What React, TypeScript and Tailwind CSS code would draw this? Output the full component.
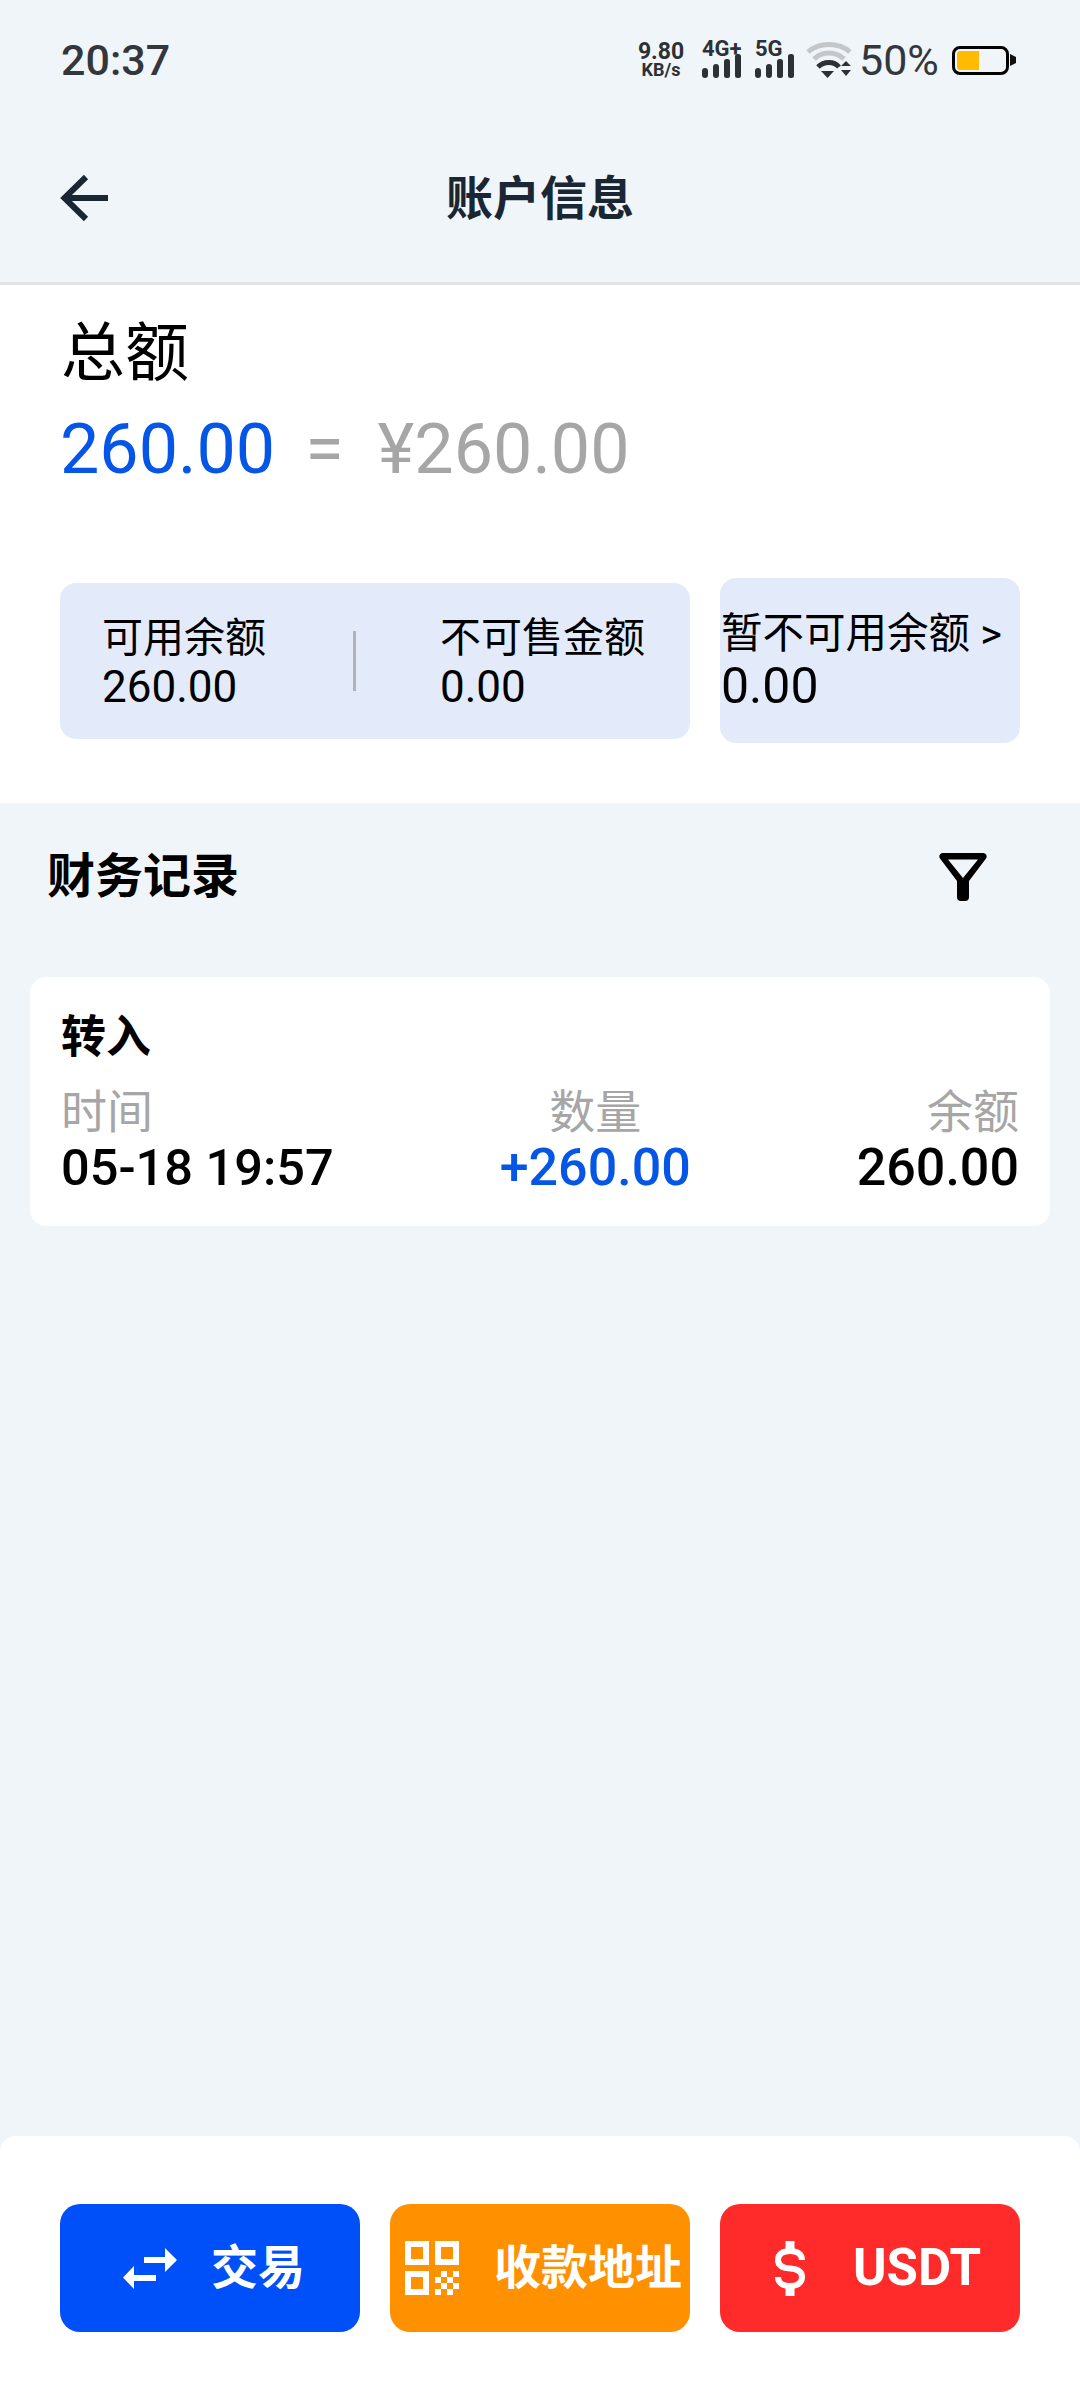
const FONT = "font-['Roboto','Noto_Sans_CJK_SC',sans-serif]";

function Bars() {
  return (
    <svg viewBox="0 0 40 24" className="w-[40px] h-[24px]" fill="#2c3136">
      <rect x="0" y="14" width="6" height="10" rx="3" />
      <rect x="11" y="10" width="6" height="14" rx="3" />
      <rect x="22" y="5" width="6" height="19" rx="2.5" />
      <rect x="33" y="0" width="6" height="24" rx="2.5" />
    </svg>
  );
}

function Wifi() {
  return (
    <svg viewBox="0 0 46 36" className="w-[46px] h-[36px]" fill="none">
      <path d="M2 10C13 0 33 0 44 10" stroke="#c4c7ca" strokeWidth="5" />
      <path d="M8 17C16 9 30 9 38 17" stroke="#c4c7ca" strokeWidth="5" />
      <path d="M12 25C18 19 28 19 33 25" stroke="#2c3136" strokeWidth="5" />
      <path d="M15 29h13l-6.500 7z" fill="#2c3136" />
      <path d="M35 24l5-5 5 5zM35 28h10l-5 6z" fill="#2c3136" />
    </svg>
  );
}

function Battery() {
  return (
    <div className="flex items-center">
      <div className="w-[57px] h-[29px] rounded-[8px] border-[3px] border-black p-[2px] flex">
        <div className="w-[22px] bg-[#ffbb00] rounded-l-[3px]" />
      </div>
      <svg viewBox="0 0 6 12" className="w-[6px] h-[12px] ml-[1px]" fill="#111"><path d="M0 0l6 3v6l-6 3z" /></svg>
    </div>
  );
}

function SignalItem({ label }: { label: string }) {
  return (
    <div className="flex flex-col w-[40px]">
      <div className="text-[22px] leading-[14px] font-bold text-[#2c3136] h-[12px] whitespace-nowrap">{label}</div>
      <Bars />
    </div>
  );
}

function StatusBar() {
  return (
    <div className="h-[120px] pl-[61px] pr-[64px] flex items-center justify-between">
      <div className="text-[43px] font-medium text-[#33373b] leading-none">20:37</div>
      <div className="flex items-center">
        <div className="flex flex-col items-center font-bold text-[#2c3136] w-[46px]">
          <div className="text-[23px] leading-[20px]">9.80</div>
          <div className="text-[18px] leading-[16px]">KB/s</div>
        </div>
        <div className="ml-[18px]"><SignalItem label="4G+" /></div>
        <div className="ml-[13px]"><SignalItem label="5G" /></div>
        <div className="ml-[11px]"><Wifi /></div>
        <div className="ml-[7px] text-[43px] leading-none text-[#33373b] w-[93px]">50%</div>
        <Battery />
      </div>
    </div>
  );
}

function TradeIcon() {
  return (
    <svg viewBox="0 0 54 41" className="w-[54px] h-[41px]" fill="#fff">
      <path d="M21 9h21V0l12 12-12 12v-9H21z" />
      <path d="M33 33H11v8L0 29.500 11 18v9h22z" />
    </svg>
  );
}

function QrIcon() {
  return (
    <svg viewBox="0 0 54 54" className="w-[54px] h-[54px]" fill="#fff">
      <path fillRule="evenodd" d="M0 0h24v24H0zM6 6v12h12V6z" />
      <path fillRule="evenodd" d="M30 0h24v24H30zM36 6v12h12V6z" />
      <path fillRule="evenodd" d="M0 30h24v24H0zM6 36v12h12V36z" />
      <path d="M36 30h6v6h-6zM48 30h6v6h-6zM30 36h6v6h-6zM42 36h6v6h-6zM36 42h6v6h-6zM48 42h6v6h-6zM30 48h6v6h-6zM42 48h6v6h-6z" />
    </svg>
  );
}

function DollarIcon() {
  return (
    <svg viewBox="0 0 30 55" className="w-[30px] h-[55px]" fill="none" stroke="#fff" strokeWidth="6">
      <path d="M15 0v11M15 44v11" strokeWidth="9" />
      <path d="M27 19C27 13 22 10 15 10C8 10 3 13 3 19C3 25 8 27 15 27.500C22 28 27 30 27 36C27 42 22 45 15 45C8 45 3 42 3 36" />
    </svg>
  );
}

function FilterIcon() {
  return (
    <svg viewBox="0 0 48 48" className="w-[48px] h-[48px]" fill="#000">
      <path fillRule="evenodd" d="M4 0h40a3.500 3.500 0 0 1 3 5.500L30 28v16a4 4 0 0 1-4 4h-4a4 4 0 0 1-4-4V28L1 5.500A3.500 3.500 0 0 1 4 0zM9 6.500L24 25 39 6.500z" />
    </svg>
  );
}

export default function App() {
  return (
    <div className={`${FONT} w-[1080px] min-h-[2400px] bg-[#f0f5fa] flex flex-col`}>
      <div className="h-[285px] border-b-[3px] border-[#e2e3e5]">
        <StatusBar />
        <div className="h-[156px] px-[60px] grid grid-cols-[1fr_auto_1fr] items-center">
          <svg viewBox="0 0 48 48" className="w-[48px] h-[48px]" fill="none" stroke="#1a2733" strokeWidth="6">
            <path d="M26 3L4.500 24 26 45" />
            <path d="M4 24h44" />
          </svg>
          <div className="text-[47px] leading-none font-bold text-[#1a2733]">账户信息</div>
        </div>
      </div>

      <div className="h-[518px] bg-white px-[60px] pt-[33px]">
        <div className="text-[64px] leading-[72px] text-black pl-[1px]">总额</div>
        <div className="mt-[19px] h-[80px] flex items-center text-[70px] leading-none">
          <span className="text-[#0556e6]">260.00</span>
          <span className="ml-[30px] text-[#a6a6a6]">=</span>
          <span className="ml-[34px] text-[#a6a6a6]">¥260.00</span>
        </div>
        <div className="mt-[89px] flex items-center gap-[30px]">
          <div className="w-[630px] h-[156px] rounded-[16px] bg-[#e3ebfb] flex items-center text-black pl-[42px]">
            <div className="w-[251px]">
              <div className="text-[41px] leading-[50px] pt-[2px]">可用余额</div>
              <div className="text-[44px] leading-[48px]">260.00</div>
            </div>
            <div className="w-[3px] h-[60px] bg-[#b0b3b8]" />
            <div className="ml-[84px]">
              <div className="text-[41px] leading-[50px] pt-[2px]">不可售金额</div>
              <div className="text-[44px] leading-[48px]">0.00</div>
            </div>
          </div>
          <div className="w-[300px] h-[165px] rounded-[16px] bg-[#e3ebfb] flex flex-col justify-center pl-[1px] text-black">
            <div className="text-[41.5px] leading-[50px] whitespace-nowrap">暂不可用余额 &gt;</div>
            <div className="text-[50px] leading-[54px]">0.00</div>
          </div>
        </div>
      </div>

      <div className="h-[144px] pl-[47px] pr-[93px] pt-[4px] flex items-center justify-between">
        <div className="text-[48px] leading-none font-bold text-black">财务记录</div>
        <FilterIcon />
      </div>

      <div className="mt-[30px] mx-[30px] w-[1020px] h-[249px] rounded-[16px] bg-white px-[31px] pt-[36px]">
        <div className="text-[45px] leading-[50px] font-bold text-black">转入</div>
        <div className="mt-[24px] flex justify-between">
          <div>
            <div className="text-[46px] leading-[50px] text-[#a6a6a6]">时间</div>
            <div className="text-[50.5px] leading-[62px] font-medium text-black">05-18 19:57</div>
          </div>
          <div className="text-center">
            <div className="text-[46px] leading-[50px] text-[#a6a6a6]">数量</div>
            <div className="text-[52px] leading-[62px] font-medium text-[#0556e6]">+260.00</div>
          </div>
          <div className="text-right">
            <div className="text-[46px] leading-[50px] text-[#a6a6a6]">余额</div>
            <div className="text-[52px] leading-[62px] font-medium text-black">260.00</div>
          </div>
        </div>
      </div>

      <div className="flex-1" />

      <div className="h-[264px] bg-white rounded-t-[16px] px-[60px] pt-[68px] flex gap-[30px] items-start text-white text-[47px] font-bold">
        <div className="w-[300px] h-[128px] rounded-[20px] bg-[#0050fa] flex items-center pl-[63px] gap-[34px]">
          <TradeIcon />
          <span>交易</span>
        </div>
        <div className="w-[300px] h-[128px] rounded-[20px] bg-[#ff9100] flex items-center pl-[15px] gap-[35px]">
          <QrIcon />
          <span className="whitespace-nowrap">收款地址</span>
        </div>
        <div className="w-[300px] h-[128px] rounded-[20px] bg-[#ff2a2a] flex items-center pl-[55px] gap-[48px]">
          <DollarIcon />
          <span className="text-[51px] font-bold">USDT</span>
        </div>
      </div>
    </div>
  );
}
